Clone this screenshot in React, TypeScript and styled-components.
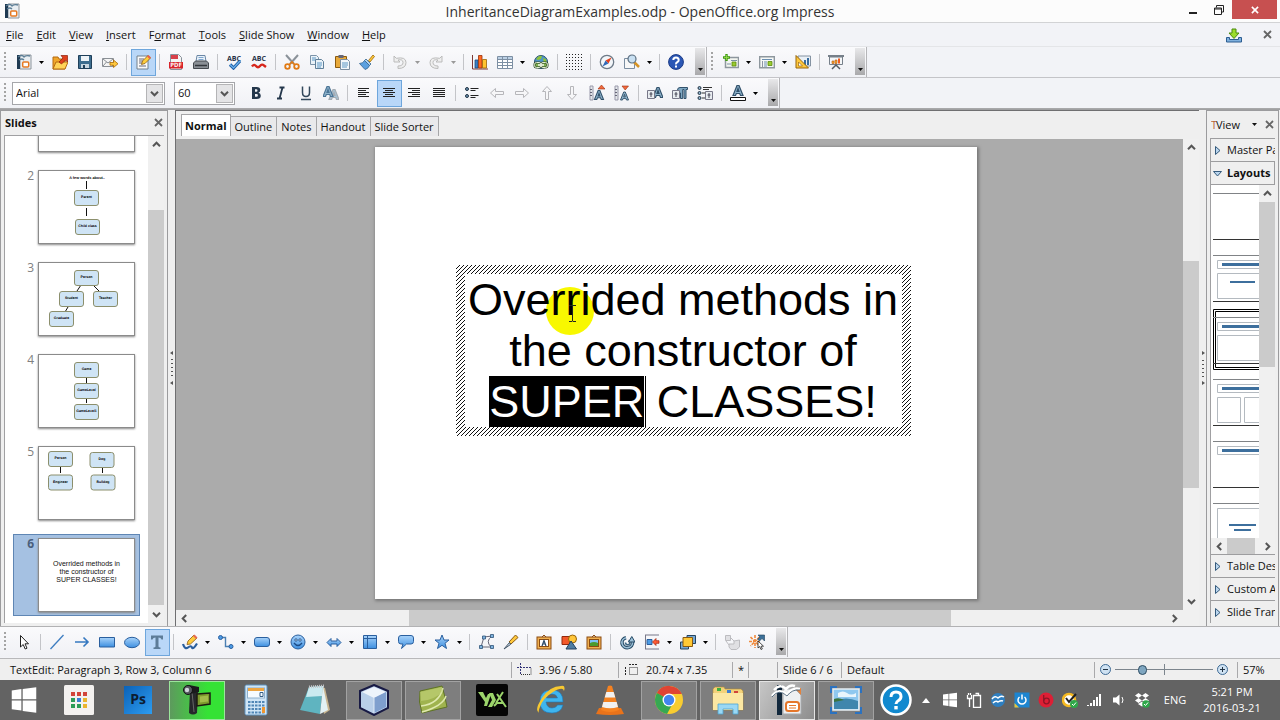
import React, { ReactNode } from "react";
import styled, { createGlobalStyle, css } from "styled-components";

const ui = `"Open Sans", "Noto Sans", sans-serif`;

const GlobalStyle = createGlobalStyle`
  * { box-sizing: border-box; }
  body { margin: 0; background: #f2f3f7; font: 11px/16px ${ui}; color: #111; }
  button { font: inherit; color: inherit; border: 0; padding: 0; background: none; }
  h1, h2, ol, ul, p { margin: 0; padding: 0; font: inherit; list-style: none; }
  svg text { text-rendering: geometricPrecision; }
`;

const Window = styled.div`
  display: flex;
  flex-direction: column;
  height: 100vh;
  overflow: hidden;
`;

/* ---------- title and menu ---------- */

const TitleBar = styled.header`
  display: grid;
  grid-template-columns: 1fr auto 1fr;
  height: 23px;
  flex: none;
  background: #fcfcfc;
  border-bottom: 1px solid #d2d3d5;
`;
const TitleIcon = styled.span`
  padding: 3px 4px;
  line-height: 0;
`;
const TitleText = styled.h1`
  font-size: 14px;
  line-height: 23px;
  color: #333;
`;
const WindowButtons = styled.div`
  display: flex;
  justify-content: flex-end;
  padding-right: 3px;
`;
const WindowButton = styled.button<{ $close?: boolean }>`
  width: ${(p) => (p.$close ? 45 : 26)}px;
  height: 19px;
  line-height: 0;
  background: ${(p) => (p.$close ? "#c75050" : "none")};
`;
const MenuBar = styled.nav`
  display: flex;
  align-items: center;
  flex: none;
  height: 24px;
  padding: 0 8px 0 6px;
  gap: 13px;
  font-size: 11px;
  border-bottom: 1px solid #e4e5e8;
`;
const MenuItem = styled.button`
  line-height: 16px;
  white-space: nowrap;
`;
const MenuTool = styled.button`
  display: flex;
  align-items: center;
  margin-left: 8px;
`;
const Spacer = styled.span`
  flex: 1;
`;

/* ---------- toolbars ---------- */

const ToolbarRow = styled.div<{ $line?: string }>`
  display: flex;
  flex: none;
  height: 31px;
  border-bottom: 1px solid ${(p) => p.$line || "#c4c4c8"};
`;
const Toolbar = styled.div`
  display: flex;
  align-items: center;
  padding-left: 4px;
  background: linear-gradient(#fafafc, #f0f1f5);
  border-right: 1px solid #b5b5b8;
`;
const Grip = styled.span`
  width: 2px;
  height: 20px;
  margin-right: 6px;
  background: repeating-linear-gradient(#a4a4a4 0 2px, transparent 2px 4px);
`;
const ToolButton = styled.button<{ $on?: boolean }>`
  display: flex;
  align-items: center;
  justify-content: center;
  width: 25px;
  height: 27px;
  padding-right: 1px;
  border: 1px solid ${(p) => (p.$on ? "#6ea6dc" : "transparent")};
  background: ${(p) => (p.$on ? "#b9d7f8" : "none")};
`;
const DropButton = styled.button<{ $off?: boolean }>`
  width: 11px;
  height: 27px;
  display: flex;
  align-items: center;
  padding-left: 2px;
  color: ${(p) => (p.$off ? "#999" : "#000")};
`;
const Divider = styled.span`
  width: 1px;
  height: 16px;
  margin: 0 4px 0 3px;
  background: #c3c4c8;
`;
const More = styled.button`
  align-self: stretch;
  display: flex;
  align-items: flex-end;
  justify-content: center;
  width: 10px;
  margin: 1px 1px 2px 6px;
  padding-bottom: 4px;
  background: linear-gradient(#e8e8ea, #a9a9ab);
`;
const Combo = styled.label<{ $w: number }>`
  position: relative;
  display: flex;
  width: ${(p) => p.$w}px;
  height: 23px;
  margin-right: 9px;
  border: 1px solid #a5a6aa;
  background: #fff;
`;
const ComboSelect = styled.select`
  appearance: none;
  flex: 1;
  min-width: 0;
  border: 0;
  outline: 0;
  padding: 0 3px;
  background: #fff;
  font: 11px/20px ${ui};
  color: #111;
`;
const ComboArrow = styled.span`
  position: absolute;
  right: 1px;
  top: 1px;
  bottom: 1px;
  width: 17px;
  display: flex;
  align-items: center;
  justify-content: center;
  background: #e4e4e6;
  border: 1px solid #b4b4b6;
  pointer-events: none;
`;

/* ---------- main area ---------- */

const Main = styled.main`
  display: flex;
  flex: 1;
  min-height: 0;
  padding-right: 1px;
  background: #efefef;
  border-top: 1px solid #a0a0a2;
  border-bottom: 1px solid #b2b2b4;
`;
const SidePanel = styled.aside<{ $w: number }>`
  display: flex;
  flex-direction: column;
  flex: none;
  width: ${(p) => p.$w}px;
  min-height: 0;
  padding: 0 3px 3px;
  border: 1px solid #9b9b9d;
  border-width: 1px 1px 0;
`;
const PanelHead = styled.div<{ $tall?: boolean }>`
  display: flex;
  align-items: center;
  flex: none;
  height: ${(p) => (p.$tall ? 27 : 24)}px;
  padding: 0 1px;
`;
const PanelTitle = styled.h2`
  flex: 1;
  font-size: 11px;
  font-weight: 700;
`;
const Splitter = styled.div`
  display: flex;
  flex-direction: column;
  align-items: center;
  justify-content: center;
  flex: none;
  width: 7px;
`;

const SlideListBox = styled.div`
  display: flex;
  flex: 1;
  min-height: 0;
  background: #fff;
  border-left: 1px solid #a0a0a2;
  border-top: 1px solid #a0a0a2;
`;
const SlideList = styled.ol`
  flex: 1;
  min-width: 0;
  display: flex;
  flex-direction: column;
  justify-content: flex-end;
  gap: 10px;
  overflow: hidden;
  padding: 0 8px 7px;
`;
const SlideItem = styled.li<{ $on?: boolean }>`
  display: flex;
  flex: none;
  height: 82px;
  padding: 3px 0;
  border: 1px solid ${(p) => (p.$on ? "#5f86b4" : "transparent")};
  background: ${(p) => (p.$on ? "#a5c1e2" : "none")};
`;
const SlideNumber = styled.span<{ $on?: boolean }>`
  width: 24px;
  padding-right: 4px;
  text-align: right;
  font-size: 12px;
  line-height: 12px;
  font-weight: ${(p) => (p.$on ? 700 : 400)};
  color: ${(p) => (p.$on ? "#4a5f7c" : "#808080")};
`;
const Thumb = styled.button`
  display: flex;
  width: 97px;
  height: 74px;
  background: #fff;
  border: 1px solid #8b8b8b;
  box-shadow: 0 1px 2px #888;
`;
const ThumbText = styled.span`
  flex: 1;
  padding: 21px 12px;
  text-align: center;
  font: 7px/8px "Liberation Sans", Arial, sans-serif;
`;

const Scroll = styled.div<{ $h?: boolean }>`
  display: flex;
  flex: none;
  flex-direction: ${(p) => (p.$h ? "row" : "column")};
  ${(p) => (p.$h ? "height" : "width")}: 16px;
  background: #f0f0f0;
`;
const ScrollCorner = styled.div`
  flex: none;
  padding-right: 17px;
  background: #f0f0f0;
`;
const ScrollButton = styled.button`
  display: flex;
  align-items: center;
  justify-content: center;
  flex: none;
  width: 16px;
  height: 17px;
`;
const ScrollPart = styled.span<{ $grow: number; $thumb?: boolean }>`
  flex: ${(p) => p.$grow} 0 0;
  background: ${(p) => (p.$thumb ? "#cbcbcb" : "none")};
`;

const Centre = styled.section`
  display: flex;
  flex-direction: column;
  flex: 1;
  min-width: 0;
  border-left: 1px solid #6f6f71;
  border-top: 1px solid #6f6f71;
`;
const Tabs = styled.div`
  display: flex;
  align-items: flex-end;
  flex: none;
  height: 28px;
  padding: 0 5px 3px;
`;
const Tab = styled.button<{ $on?: boolean }>`
  height: ${(p) => (p.$on ? 22 : 20)}px;
  padding: 0 4px;
  border: 1px solid #a6a6a8;
  border-width: 1px 1px 0 0;
  background: #e9e9eb;
  ${(p) => p.$on && css`
    padding: 0 3px;
    background: #fff;
    border-left-width: 1px;
    font-weight: 700;
  `}
`;
const WorkRow = styled.div`
  display: flex;
  flex: 1;
  min-height: 0;
`;
const Workspace = styled.div`
  flex: 1;
  min-width: 0;
  display: flex;
  justify-content: center;
  align-items: flex-start;
  padding: 8px 8px 8px 0;
  background: #ababab;
  overflow: hidden;
`;
const Slide = styled.article`
  display: flex;
  justify-content: center;
  width: 602px;
  aspect-ratio: 4 / 3;
  padding: 118px 0 0 15px;
  background: #fff;
  box-shadow: 1px 1px 3px 1px #777;
`;
const TextFrame = styled.div`
  align-self: flex-start;
  padding: 9px;
  background: linear-gradient(to bottom right, #fff 0 42%, #111 42% 58%, #fff 58%) 0 0 / 4px 4px;
`;
const SlideText = styled.p`
  position: relative;
  width: 437px;
  background: #fff;
  text-align: center;
  white-space: nowrap;
  color: #000;
  font: 45px/51px "Liberation Sans", Arial, sans-serif;
`;
const Line = styled.span`
  position: relative;
  display: block;
`;
const Selected = styled.mark`
  display: inline-block;
  height: 51px;
  color: #fff;
  background: #000;
  box-shadow: 1px 0 #fff, 2px 0 #000;
`;
const Halo = styled.span`
  position: absolute;
  left: 81px;
  top: 13px;
  width: 48px;
  height: 48px;
  border-radius: 50%;
  background: #f8f800;
`;
const IBeam = styled.svg`
  position: absolute;
  left: 103px;
  top: 31px;
`;

/* ---------- task panel ---------- */

const TaskBody = styled.div`
  display: flex;
  flex-direction: column;
  flex: 1;
  min-height: 0;
  border-left: 1px solid #a0a0a2;
`;
const TaskTab = styled.button<{ $on?: boolean }>`
  display: flex;
  align-items: center;
  flex: none;
  gap: 5px;
  height: 23px;
  padding-left: 2px;
  overflow: hidden;
  white-space: nowrap;
  border-top: 1px solid #9d9d9f;
  border-right: ${(p) => (p.$on ? "1px solid #9d9d9f" : 0)};
  font-weight: ${(p) => (p.$on ? 700 : 400)};
  svg { flex: none; }
`;
const LayoutBox = styled.div`
  display: flex;
  flex: 1;
  min-height: 0;
  background: #fff;
  border-top: 1px solid #9d9d9f;
`;
const LayoutList = styled.ul`
  flex: 1;
  min-width: 0;
  padding: 0 0 0 2px;
  overflow: hidden;
`;
const LayoutItem = styled.li`
  height: 62px;
  line-height: 0;
`;
const ViewDrop = styled.button`
  display: flex;
  align-items: center;
  gap: 12px;
  flex: 1;
`;
const Clipped = styled.span`
  width: 5px;
  overflow: hidden;
  color: #b7643a;
`;

/* ---------- status bar ---------- */

const StatusBar = styled.footer`
  display: flex;
  align-items: center;
  flex: none;
  height: 22px;
  padding: 0 12px 0 10px;
  background: #efefef;
  border-top: 1px solid #b8b8ba;
`;
const Cell = styled.span<{ $w?: number; $gap?: number }>`
  display: flex;
  align-items: center;
  gap: ${(p) => p.$gap ?? 4}px;
  flex: none;
  height: 16px;
  width: ${(p) => (p.$w ? p.$w + "px" : "auto")};
  padding-left: 5px;
  border-left: 1px solid #a9a9ab;
`;
const ZoomRange = styled.input`
  appearance: none;
  width: 98px;
  height: 14px;
  margin: 0;
  background:
    linear-gradient(#7c858d, #7c858d) 49px 50% / 1px 11px no-repeat,
    linear-gradient(#7c858d, #7c858d) 0 50% / 100% 1px no-repeat;
  &::-webkit-slider-thumb {
    appearance: none;
    width: 9px;
    height: 10px;
    border-radius: 5px;
    border: 1px solid #2d4c62;
    background: #7fa6c0;
  }
`;

/* ---------- taskbar ---------- */

const TaskBar = styled.nav`
  display: flex;
  align-items: center;
  flex: none;
  height: 40px;
  padding-right: 19px;
  gap: 3px;
  background: #636363;
  color: #fff;
`;
const TaskButton = styled.button<{ $w?: number; $state?: "open" | "active" | "rec" }>`
  display: flex;
  align-items: center;
  justify-content: center;
  flex: none;
  width: ${(p) => p.$w || 56}px;
  height: 39px;
  border: 1px solid transparent;
  ${(p) => p.$state === "open" && css`background: #7e7e7e; border-color: #a2a2a2;`}
  ${(p) => p.$state === "active" && css`background: linear-gradient(120deg, #c6c6c6, #8d8d8d); border-color: #e4e4e4;`}
  ${(p) => p.$state === "rec" && css`background: linear-gradient(90deg, #5d9a5d, #35e235 70%); border-color: #9be59b;`}
`;
const Tray = styled.div`
  display: flex;
  align-items: center;
  gap: 8px;
  margin-left: auto;
`;
const TrayButton = styled.button`
  display: flex;
  flex: none;
  width: 16px;
  height: 20px;
  align-items: center;
  justify-content: center;
`;
const Lang = styled.span`
  width: 34px;
  text-align: center;
`;
const Clock = styled.time`
  width: 64px;
  text-align: center;
  line-height: 16px;
`;

/* ---------- icons ---------- */

const navy = "#31516b";
const blue = "#4b9be6";
const edge = "#2a5f9e";

const doc = (
  <>
    <path d="M4 1h11v14H4z" fill="#e9eef2" stroke="#8c949b" />
    <path d="M1 1h3v14H1z" fill="#1f3a52" />
    <path d="M2 3q4-3 6 0q2-2 6-1M3 6q3-2 5 0" stroke="#5b7d95" fill="none" strokeWidth="1.3" />
    <rect x="6.7" y="8" width="6" height="5" rx="1" fill="#fff" stroke="#e67a22" strokeWidth="1.5" />
  </>
);
const lines = (ws: number[], align: "l" | "c" | "r") => (
  <path
    stroke="#222"
    d={ws
      .map((w, i) => {
        const x = align === "l" ? 2 : align === "r" ? 14 - w : 8 - w / 2;
        return `M${x} ${3.5 + i * 2}h${w}`;
      })
      .join("")}
  />
);
const hollow = (rot: number) => (
  <path
    transform={`rotate(${rot} 8 8)`}
    d="M1.5 8L6.5 3.5V6.5H14.5V9.5H6.5V12.5Z"
    fill="#f6f6f8"
    stroke="#b6b6ba"
  />
);
const bigA = (x: number, y: number, s: number, fill = navy) => (
  <path
    transform={`translate(${x} ${y}) scale(${s})`}
    d="M0 10L4 0H6L10 10H7.5L6.7 8H3.3L2.5 10ZM4 6H6L5 3Z"
    fill="#8fb4cc"
    stroke={fill}
    strokeWidth="1.2"
    fillRule="evenodd"
  />
);
const abc = (
  <text x="8" y="6.500" textAnchor="middle" fontSize="7" fontWeight="700" fontFamily="Open Sans, sans-serif" fill="#1f2f44">
    ABC
  </text>
);
const framed = (inner: ReactNode) => (
  <>
    <rect x="1" y="3" width="14" height="12" fill="#f0b050" stroke="#8a4b12" />
    <rect x="3.5" y="5.5" width="9" height="7" fill="#fff" stroke="#8a4b12" />
    <path d="M6 3l2-2 2 2" stroke="#8a4b12" fill="none" />
    {inner}
  </>
);

const icons: Record<string, ReactNode> = {
  doc,
  open: (
    <>
      <path d="M1 3h5l1 2h6v10H1z" fill="#f0a52a" stroke="#b46a10" />
      <path d="M1 15l3-7h12l-3 7z" fill="#ffd257" stroke="#b46a10" />
      <path d="M7 8l4-4-2-2.500h6.500V8l-2-2-4 4z" fill="#e0401c" stroke="#8e1e08" strokeWidth=".7" />
    </>
  ),
  save: (
    <>
      <path d="M1.500 1.500h13v13h-13z" fill="#3d6d8e" stroke="#1f3f59" />
      <path d="M4 2h8v5H4z" fill="#eef3f7" />
      <path d="M4 10h8v4H4z" fill="#c9d6e0" />
      <path d="M6 11h2v3H6z" fill="#1f3f59" />
    </>
  ),
  mail: (
    <>
      <path d="M.5 4.500h11v8h-11z" fill="#f4f4f4" stroke="#8a8f95" />
      <path d="M1 5l5 4 5-4M1 12l3.500-4M11 12L7.500 8" stroke="#8a8f95" fill="none" />
      <path d="M8 8.500h3.500V6L16 9.800l-4.500 3.700v-2.300H8z" fill="#ffc83c" stroke="#a86708" strokeWidth=".8" />
    </>
  ),
  edit: (
    <>
      <path d="M2 2h11v13H2z" fill="#fafafa" stroke="#72808c" />
      <path d="M4 5h5M4 7h4M4 9h3M4 12h7" stroke="#667" />
      <path d="M6.500 10.500L7.500 7 13 1.500l2.500 2.500L10 9.500z" fill="#ffcf3c" stroke="#8a5a10" strokeWidth=".8" />
      <path d="M12 2.500l1.500-1.500 2.500 2.500-1.500 1.500z" fill="#e8604c" />
    </>
  ),
  pdf: (
    <>
      <path d="M2.500.5h8l3 3v12h-11z" fill="#f4f4f4" stroke="#88919a" />
      <path d="M3 1h7v4H3z" fill="#d8404a" />
      <path d="M1 8h14v6.500H1z" fill="#d8232a" />
      <text x="8" y="13.300" fontSize="6" fontWeight="700" textAnchor="middle" fill="#fff" fontFamily="Open Sans, sans-serif">PDF</text>
    </>
  ),
  print: (
    <>
      <path d="M4 1.500h8l1 6H3z" fill="#eaf2fa" stroke="#6b87a5" />
      <path d="M5.500 3.500h5M5.500 5.500h5" stroke="#7fa6cf" />
      <path d="M.5 9l2-2h11l2 2v5.500H.5z" fill="#8a8f95" stroke="#44494f" />
      <path d="M2 11.500h12" stroke="#33373c" strokeWidth="1.500" />
    </>
  ),
  spell: <>{abc}<path d="M4 10.500l3.500 3.500L14 7" fill="none" stroke="#1f5fa8" strokeWidth="3.200" /><path d="M4 10.500l3.500 3.500L14 7" fill="none" stroke="#6fb4ee" strokeWidth="1.200" /></>,
  autospell: <>{abc}<path d="M1 12.500q2-3 4-.5t4 0 4-.5l2 1.500" fill="none" stroke="#d6261c" strokeWidth="2.400" /></>,
  cut: (
    <>
      <path d="M2 1l8 9M14 1L6 10" stroke="#8b9299" strokeWidth="2" />
      <circle cx="3.500" cy="12.500" r="2.300" fill="none" stroke="#e07a14" strokeWidth="1.800" />
      <circle cx="12.500" cy="12.500" r="2.300" fill="none" stroke="#e07a14" strokeWidth="1.800" />
      <path d="M5 11l3-3 3 3" stroke="#e07a14" strokeWidth="1.600" fill="none" />
    </>
  ),
  copy: (
    <>
      <path d="M1.500 1.500h6l2 2v7h-8z" fill="#eaf2f8" stroke="#7b93a8" />
      <path d="M6.500 5.500h6l2 2v7h-8z" fill="#eaf2f8" stroke="#5f7f99" />
      <path d="M3 4h4M3 6h3M8 9h5M8 11h5M8 13h4" stroke="#5b96c4" />
    </>
  ),
  paste: (
    <>
      <path d="M1.500 2.500h11v11h-11z" fill="#e8a93a" stroke="#8a5a10" />
      <path d="M4.500 1h5v3h-5z" fill="#667" />
      <path d="M6.500 5.500h7l2 2v8h-9z" fill="#f2f6fa" stroke="#7b8da0" />
      <path d="M8 9h6M8 11h6M8 13h5" stroke="#5b96c4" />
    </>
  ),
  brush: (
    <>
      <path d="M9.500 6.500L14 1l1.500 1.500L11 8z" fill="#ffca3a" stroke="#9a6508" strokeWidth=".8" />
      <path d="M7 5l5 5-1.500 1.500L5.500 6.500z" fill="#b0d3f0" stroke="#33648f" strokeWidth=".8" />
      <path d="M5.500 6.500l5 5Q9 15 6 15.500L.5 9.500Q4 9.500 5.500 6.500z" fill="#5ba0df" stroke="#33648f" strokeWidth=".8" />
    </>
  ),
  undo: <path d="M2 2v6h6L6 6q5-1 5 2.500T6 12v2.500q8 0 8-6T4.300 4.300z" fill="#eee" stroke="#bbb" />,
  redo: <path transform="translate(16 0) scale(-1 1)" d="M2 2v6h6L6 6q5-1 5 2.500T6 12v2.500q8 0 8-6T4.300 4.300z" fill="#eee" stroke="#bbb" />,
  chart: (
    <>
      <path d="M.5 1v14H16" stroke="#7b3a36" fill="none" />
      <path d="M3 6h3v8H3z" fill="#3a7fc4" stroke="#1e4c7c" strokeWidth=".8" />
      <path d="M6.500 1.500h3.500V14H6.500z" fill="#ff6a20" stroke="#9a2e08" strokeWidth=".8" />
      <path d="M10.500 5.500h4V14h-4z" fill="#ffc42e" stroke="#9a6508" strokeWidth=".8" />
    </>
  ),
  table: (
    <>
      <path d="M.5 2.500h15v12H.5z" fill="#fff" stroke="#7d8fa3" />
      <path d="M1 3h14v2.500H1z" fill="#bcd0e4" />
      <path d="M1 5.500h14M1 8.500h14M1 11.500h14M5.500 3v11M10.500 3v11" stroke="#7d8fa3" />
    </>
  ),
  link: (
    <>
      <circle cx="8" cy="8" r="6.500" fill="#4f94c9" stroke="#28506f" />
      <path d="M3 5q3-4 6-3l-1 3-3 1zM10 4l3 1 1 4-3 1z" fill="#8fc23a" />
      <rect x="1.500" y="8.500" width="6.500" height="5" rx="2" fill="#7fae50" stroke="#2f4a28" strokeWidth="2" />
      <rect x="8" y="8.500" width="6.500" height="5" rx="2" fill="#7fae50" stroke="#2f4a28" strokeWidth="2" />
      <rect x="1.500" y="8.500" width="6.500" height="5" rx="2" fill="none" stroke="#e2ecd2" />
      <rect x="8" y="8.500" width="6.500" height="5" rx="2" fill="none" stroke="#e2ecd2" />
      <path d="M5 11h6" stroke="#f4f8ec" strokeWidth="1.500" />
    </>
  ),
  grid: <path d="M0 .5h16M0 3.500h16M0 6.500h16M0 9.500h16M0 12.500h16M0 15.500h16" stroke="#222" strokeDasharray="1 2" />,
  nav: (
    <>
      <circle cx="8" cy="8" r="6.700" fill="#f3f6f9" stroke="#6d7a88" strokeWidth="1.300" />
      <path d="M12.500 3.500L9.500 9.500 6.500 6.500z" fill="#e3401f" />
      <path d="M3.500 12.500L9.500 9.500 6.500 6.500z" fill="#3069b6" />
    </>
  ),
  zoom: (
    <>
      <path d="M.5 4.500h10v10H.5z" fill="#f7f7f7" stroke="#7b8da0" />
      <path d="M10 8l5 5" stroke="#d69324" strokeWidth="2.500" />
      <circle cx="8" cy="5" r="4" fill="#c9e0f2" stroke="#5c6f80" strokeWidth="1.200" />
    </>
  ),
  help: (
    <>
      <circle cx="8" cy="8" r="7.400" fill="#2b57b5" stroke="#1a3a86" />
      <path d="M5.300 6Q5.300 3.500 8 3.500T10.700 6Q10.700 7.300 9.300 8.200T8 10.300" stroke="#fff" strokeWidth="2" fill="none" />
      <path d="M7 11.500h2v2H7z" fill="#fff" />
    </>
  ),
  slide: (
    <>
      <path d="M2.500 3.500h13v10h-13z" fill="#f3f6f0" stroke="#8e979e" strokeWidth="1.500" />
      <path d="M8 6.500h6M4 10h4" stroke="#7c93a5" />
      <path d="M9 8h4v4H9z" fill="#9acb2e" stroke="#5a8a10" strokeWidth=".8" />
      <path d="M3.500 0v7M0 3.500h7" stroke="#3f9a10" strokeWidth="2.400" />
      <path d="M3.500 1v5M1 3.500h5" stroke="#9ade50" strokeWidth=".8" />
    </>
  ),
  layout: (
    <>
      <path d="M.700 2.700h14.600v11H.700z" fill="#f6f8f6" stroke="#8e979e" strokeWidth="1.400" />
      <path d="M3 5.500h10M5 8h3M5 10h3M5 12h3" stroke="#6c8fb0" />
      <path d="M3 8h1M3 10h1M3 12h1" stroke="#235" />
      <path d="M9 7.500h4v4H9z" fill="#9acb2e" stroke="#5a8a10" strokeWidth=".8" />
    </>
  ),
  design: (
    <>
      <path d="M3 2h12.500v10H3z" fill="#e9eff5" stroke="#8593a2" />
      <path d="M9 6h2v5H9zM12 4h2v7h-2z" fill="#376b9e" />
      <path d="M1 1.500L13.500 14H1z" fill="#ffc83c" stroke="#96640c" />
      <path d="M3.500 8l4 4h-4z" fill="#fff" stroke="#96640c" strokeWidth=".7" />
    </>
  ),
  show: (
    <>
      <path d="M0 2h16" stroke="#77808a" strokeWidth="2" />
      <path d="M1.500 3h13v7.500h-13z" fill="#f5f7f9" stroke="#77808a" />
      <path d="M4 7h2v2.500H4zM7 6h2v3.500H7z" fill="#ffae2e" stroke="#b0500e" strokeWidth=".6" />
      <path d="M10 4.500h2v5h-2z" fill="#f05a20" />
      <path d="M4 15l4-4 4 4" stroke="#555c63" strokeWidth="1.500" fill="none" />
    </>
  ),
  bold: <path d="M4 2h4.500q3.800 0 3.800 3.100 0 2-1.800 2.600 2.300.6 2.300 3 0 3.300-4.300 3.300H4zM7 4.200v2.600h1.300q1.200 0 1.200-1.300T8.300 4.200zM7 9v2.800h1.500q1.400 0 1.400-1.400T8.500 9z" fill="#24374b" fillRule="evenodd" />,
  italic: <path d="M6.500 2.500h5M4 13.500h5M9.500 2.500L6.500 13.500" stroke="#24374b" strokeWidth="1.800" />,
  underline: <path d="M4.500 1.500v6q0 4 3.500 4t3.500-4v-6M3 14.500h10" stroke="#33485c" strokeWidth="1.500" fill="none" />,
  shadow: (
    <>
      <g opacity=".75">{bigA(6, 4.5, 1, "#8b949c")}</g>
      {bigA(0, 1.5, 1, "#4c7596")}
    </>
  ),
  left: lines([11, 8, 11, 8, 11], "l"),
  centre: lines([12, 8, 12, 8, 12], "c"),
  right: lines([12, 8, 12, 8, 12], "r"),
  justify: lines([12, 12, 12, 12, 12], "l"),
  bullets: (
    <>
      <circle cx="3" cy="4" r="1.500" fill="#6a94b4" stroke="#234" />
      <circle cx="3" cy="11" r="1.500" fill="#6a94b4" stroke="#234" />
      <path d="M6.500 3.500h8M6.500 5.500h5M6.500 10.500h8M6.500 12.500h5" stroke="#222" />
    </>
  ),
  aLeft: hollow(0),
  aRight: hollow(180),
  aUp: hollow(90),
  aDown: hollow(270),
  incSpace: <><path d="M1 1h3v14H1z" fill="#e4e7ea" stroke="#99a" /><path d="M1 4.500h2M1 7.500h2M1 10.500h2" stroke="#667" />{bigA(5.5, 5.5, 0.9)}<path d="M9 4l3.500-4L16 4z" fill="#f06a3c" stroke="#a02e10" strokeWidth=".6" /></>,
  decSpace: <><path d="M1 1h3v14H1z" fill="#e4e7ea" stroke="#99a" /><path d="M1 4.500h2M1 7.500h2M1 10.500h2" stroke="#667" />{bigA(6.5, 7, 0.8)}<path d="M8 1l3.200 4L14.500 1z" fill="#f06a3c" stroke="#a02e10" strokeWidth=".6" /></>,
  charDlg: <>{bigA(6, 2.5, 1)}<path d="M.5 5.500h7v8h-7z" fill="#e8ecf0" stroke="#778" /><path d="M4 7v5M2.500 9h3" stroke="#445" /></>,
  paraDlg: <><path d="M15.500 2.500H8q-2.500 0-2.500 2.700T8.500 8v5.500h2.200V4.500H12v9h2V4.500h1.500z" fill="#7ea7c2" stroke={navy} /><path d="M.5 5.500h7v8h-7z" fill="#e8ecf0" stroke="#778" /><path d="M4 7v5M2.500 9h3" stroke="#445" /></>,
  bulletDlg: (
    <>
      <g fill="#8fb4cc" stroke="#234"><circle cx="2.500" cy="3" r="1.500" /><circle cx="2.500" cy="8" r="1.500" /><circle cx="2.500" cy="13" r="1.500" /></g>
      <path d="M6 2.500h9M6 4.500h6M5 8h3M5 13h3" stroke="#333" />
      <path d="M8.500 6.500h7v8h-7z" fill="#e8ecf0" stroke="#778" />
      <path d="M12 8v5M10.500 10h3" stroke="#445" />
    </>
  ),
  fontColor: <>{bigA(3, 0.500, 1)}<path d="M.5 12.500h15v3H.5z" fill="#fff" stroke="#111" /></>,
  select: <path d="M4.500 1.500v11.500l2.700-2.500 2 4.500 1.800-.8-2-4.400h3.500z" fill="#fff" stroke="#222" />,
  line: <path d="M1.500 15L14.500 1" stroke="#3c7cc0" strokeWidth="1.300" />,
  arrow: <path d="M1 8h13M9.500 3.500L14 8l-4.500 4.500" stroke="#3578c0" strokeWidth="1.600" fill="none" />,
  rect: <path d="M.5 3.500h15v9.500H.5z" fill="url(#sky)" stroke={edge} />,
  ellipse: <ellipse cx="8" cy="8.500" rx="7.500" ry="5.200" fill="url(#sky)" stroke={edge} />,
  text: <path d="M2 1.500h12v4h-1.500Q12 3.500 9.500 3.500V12.500q0 1 2 1V15h-7v-1.500q2 0 2-1V3.500Q4 3.500 3.500 5.500H2z" fill="#5d7c98" />,
  pencil: (
    <>
      <path d="M1 10q2 6 5 3.500t4 0 5-4" stroke={edge} strokeWidth="2.200" fill="none" />
      <path d="M5 10.500L6 7l6-6 3 3-6.500 6z" fill="#ffcb3b" stroke="#8a5a10" strokeWidth=".8" />
      <path d="M11 2l1.500-1.500 3 3L14 5z" fill="#e66a54" />
    </>
  ),
  connector: <><path d="M3 3.500h4.500v9H13" stroke="#4a7fb2" strokeWidth="1.400" fill="none" /><circle cx="2.500" cy="3.500" r="2" fill={blue} stroke={edge} /><circle cx="13" cy="12.500" r="2" fill={blue} stroke={edge} /></>,
  block: <rect x=".5" y="3.500" width="15" height="9" rx="2.500" fill="url(#sky)" stroke={edge} />,
  smiley: <><circle cx="8" cy="8" r="7" fill="url(#sky)" stroke={edge} /><path d="M4 9q4 5 8 0" stroke="#1d4c86" fill="none" strokeWidth="1.300" /><path d="M5 5h2v2H5zM9 5h2v2H9z" fill="#fff" stroke="#1d4c86" strokeWidth=".8" /></>,
  double: <path d="M1 8.500L5 4.500v2.500h6V4.500l4 4-4 4v-2.500H5v2.500z" fill="url(#sky)" stroke={edge} />,
  flow: <><path d="M1.500 1.500h13v13h-13z" fill="url(#sky)" stroke={edge} /><path d="M1.500 4.500h13M5.500 1.500v13" stroke={edge} /></>,
  callout: <path d="M3 1.500h10q2.500 0 2.500 2.500v3.500q0 2.500-2.500 2.500H8.500L3.500 14.500 5 10H3Q.5 10 .5 7.500V4Q.5 1.500 3 1.500z" fill="url(#sky)" stroke={edge} />,
  star: <path d="M8 1l2 5h5l-4 3.300 1.500 5.200L8 11.300l-4.500 3.200L5 9.300 1 6h5z" fill="url(#sky)" stroke={edge} />,
  points: <><path d="M3 13l3-10 8-1M3 13h12M14 2q-7 5-1 11" stroke="#667" fill="none" /><path d="M1.500 11.500h3v3h-3zM4.500 2h3v3h-3zM12.500.5h3v3h-3zM12.500 11.500h3v3h-3z" fill="#7fb2de" stroke="#2f5478" strokeWidth=".8" /></>,
  glue: <><path d="M6 8l6.500-7L15 3.500 8 10z" fill="#ffc83c" stroke="#8a5a10" /><path d="M6.500 8.500L1 15l6.500-4.500z" fill="#cfe0f0" stroke="#456" /></>,
  fontwork: framed(<path d="M6 12l2-5.500L10 12M6.800 10h2.500" stroke="#2c4a66" strokeWidth="1.200" fill="none" />),
  gallery: <><path d="M1 2.500h8v8H1z" fill="#f2582a" stroke="#93280c" /><circle cx="11.500" cy="5" r="4" fill="#ffc63a" stroke="#976409" /><path d="M10 7l5.500 8H5z" fill="#4f7da3" stroke="#24435f" /></>,
  picture: framed(<><path d="M4 6h8v3H4z" fill="#7ec0f4" /><path d="M4 9q4-2 8 0v3H4z" fill="#4c9a2e" /></>),
  rotate: (
    <>
      <path d="M13.500 8A5.300 5 0 1 1 7 3.800" stroke="#264a66" strokeWidth="3.600" fill="none" />
      <path d="M13.500 8A5.300 5 0 1 1 7 3.800" stroke="#9cc0d8" strokeWidth="1.600" fill="none" />
      <path d="M6.500 8.500a2.200 2.200 0 1 0 3-2" stroke="#3c6684" strokeWidth="1.500" fill="none" />
      <path d="M9.500 8h6.500L12.800 2.500z" fill="#9cc0d8" stroke="#264a66" />
    </>
  ),
  align: <><path d="M1 1h14M1 15h14M1.500 1v14" stroke="#778" /><path d="M3 5.500h5v5H3z" fill="#4b9be6" stroke={edge} /><path d="M15 6.700h-3V4.500L8.500 8l3.500 3.500V9.300h3z" fill="#ff5b36" stroke="#a02008" strokeWidth=".7" /></>,
  arrange: <><path d="M7 1.500h8.500v8H7z" fill="#74a7d4" stroke="#24435f" /><path d="M.5 8h8v7h-8z" fill="#74a7d4" stroke="#24435f" /><path d="M3 3.500h9.500v9H3z" fill="#ffc935" stroke="#8a5a10" /></>,
  extrude: <path d="M1.500 1.500h5v5h-5zM5 10h5V7l5.500-1v7l-3 2.500H7L5 13zM7 4l3 3M2 7l3 4" fill="#e0e0e3" stroke="#bcbcc0" />,
  animate: <><path d="M6 1v13M0 7.500h12M1.500 3l9 9M10.500 3l-9 9" stroke="#f08a3c" strokeWidth="1.600" strokeDasharray="3 1" /><path d="M9 1h6.500v6L13 4.500 10.500 7 8.500 5 11 3z" fill="#3d7199" stroke="#1f3f59" strokeWidth=".6" /><path d="M9 7v7l1.700-1.500L12 15.500l1.300-.6-1.200-2.700h2.400z" fill="#fff" stroke="#222" strokeWidth=".8" /></>,
  download: <><path d="M.5 10.500h3v2h9v-2h3v4.500H.5z" fill="#7fb0dd" stroke="#2c5d90" /><path d="M6 2h4v4h3L8 11.500 3 6h3z" fill="#9bdc2c" stroke="#4b8a0c" /></>,
};

const Icon = ({ name }: { name: string }) => (
  <svg width="16" height="16" viewBox="0 0 16 16" aria-hidden="true">
    <defs>
      <linearGradient id="sky" x1="0" y1="0" x2="0" y2="1">
        <stop offset="0" stopColor="#a9d3fa" />
        <stop offset="1" stopColor="#3d8fe0" />
      </linearGradient>
    </defs>
    {icons[name]}
  </svg>
);

const Triangle = () => (
  <svg width="5" height="3" viewBox="0 0 5 3"><path d="M0 0h5L2.500 3z" fill="currentColor" /></svg>
);
const Cross = ({ c = "#666", s = 9 }) => (
  <svg width={s} height={s} viewBox="0 0 9 9"><path d="M1 1l7 7M8 1L1 8" stroke={c} strokeWidth="1.800" /></svg>
);
const Chevron = ({ rot = 0 }) => (
  <svg width="9" height="9" viewBox="0 0 9 9"><path transform={`rotate(${rot} 4.500 4.500)`} d="M1 6.200l3.500-3.500L8 6.200" stroke="#555" strokeWidth="2" fill="none" /></svg>
);

/* "|" is a divider, "v" a drop-down arrow ("v-" disabled), "*" marks a pressed button */
const Tools = ({ items }: { items: string }) => (
  <>
    {items.split(" ").map((item, i) => {
      if (item === "|") return <Divider key={i} />;
      if (item === "v" || item === "v-")
        return <DropButton key={i} $off={item === "v-"} aria-label="More choices"><Triangle /></DropButton>;
      const name = item.replace("*", "");
      return (
        <ToolButton key={i} $on={item.endsWith("*")} aria-label={name}>
          <Icon name={name} />
        </ToolButton>
      );
    })}
  </>
);
const Overflow = () => <More aria-label="Toolbar options"><Triangle /></More>;

const Dropdown = ({ label, value, w }: { label: string; value: string; w: number }) => (
  <Combo $w={w}>
    <ComboSelect aria-label={label} defaultValue={value}><option>{value}</option></ComboSelect>
    <ComboArrow><Chevron rot={180} /></ComboArrow>
  </Combo>
);

const ScrollBar = ({ h, parts, end = true }: { h?: boolean; parts: number[]; end?: boolean }) => (
  <Scroll $h={h}>
    <ScrollButton aria-label="Scroll back"><Chevron rot={h ? -90 : 0} /></ScrollButton>
    <ScrollPart $grow={parts[0]} />
    <ScrollPart $grow={parts[1]} $thumb />
    <ScrollPart $grow={parts[2]} />
    {end && <ScrollButton aria-label="Scroll forward"><Chevron rot={h ? 90 : 180} /></ScrollButton>}
  </Scroll>
);

const SplitHandle = ({ rot = 0 }) => (
  <Splitter>
    <svg width="4" height="34" viewBox="0 0 4 34">
      <g transform={`rotate(${rot} 2 17)`} fill="#555">
        <path d="M3 0v4L0 2zM3 30v4L0 32z" />
        <path d="M1 8h2v1H1zM1 12h2v1H1zM1 16h2v1H1zM1 20h2v1H1zM1 24h2v1H1z" />
      </g>
    </svg>
  </Splitter>
);

/* ---------- slide thumbnails ---------- */

type Box = [number, number, string];
const Diagram = ({ boxes, links, title }: { boxes: Box[]; links: string; title?: string }) => (
  <svg width="95" height="72" viewBox="0 0 95 72">
    <path d={links} stroke="#111" fill="none" />
    {boxes.map(([x, y, label]) => (
      <g key={label}>
        <rect x={x - 12} y={y - 7.5} width="24" height="15" rx="2.500" fill="#cfe4f5" stroke="#8c8f6c" />
        <text x={x} y={y} textAnchor="middle" fontSize="3.500" fontWeight="700" fontFamily="Liberation Sans, sans-serif">{label}</text>
      </g>
    ))}
    {title && <text x="48" y="8" textAnchor="middle" fontSize="3.800" fontWeight="700" fontFamily="Liberation Sans, sans-serif">{title}</text>}
  </svg>
);

const slides: { n: number; art: ReactNode; on?: boolean }[] = [
  { n: 1, art: null },
  { n: 2, art: <Diagram title="A few words about.." links="M47.500 10v8M47.500 37v8" boxes={[[47.5, 27, "Parent"], [48.5, 56, "Child class"]]} /> },
  { n: 3, art: <Diagram links="M42 22l-4 6M54 22l6 6M29 44l-3 5" boxes={[[47.5, 15, "Person"], [32.5, 36, "Student"], [66.5, 36, "Teacher"], [22.5, 56, "Graduate"]]} /> },
  { n: 4, art: <Diagram links="M47.500 22v6M47.500 43v5" boxes={[[47.5, 15, "Game"], [47.5, 36, "GameLevel"], [47.5, 57, "GameLevel1"]]} /> },
  { n: 5, art: <Diagram links="M21.500 20v6M63.500 20v6" boxes={[[21.5, 12, "Person"], [21.5, 35.5, "Engineer"], [63, 13, "Dog"], [64, 35.5, "Bulldog"]]} /> },
  { n: 6, on: true, art: <ThumbText>Overrided methods in the constructor of SUPER CLASSES!</ThumbText> },
];

const heading = (
  <>
    <path d="M4.500 13.500H60v8H4.500z" fill="none" stroke="#b4bac0" />
    <path d="M9 17.500h50" stroke="#3d6f9d" strokeWidth="3" />
  </>
);
const layoutArt: { body: ReactNode; on?: boolean }[] = [
  { body: null },
  { body: <>{heading}<path d="M4.500 26.500H60v25H4.500z" fill="none" stroke="#b4bac0" /><path d="M17 35h25" stroke="#3d6f9d" strokeWidth="2" /></> },
  { on: true, body: <>{heading}<path d="M4.500 26.500H60v25H4.500z" fill="none" stroke="#b4bac0" /></> },
  { body: <>{heading}<path d="M4.500 26.500h23v25h-23zM31.500 26.500H60v25H31.500z" fill="none" stroke="#b4bac0" /></> },
  { body: heading },
  { body: <><path d="M4.500 13.500H60v38H4.500z" fill="none" stroke="#b4bac0" /><path d="M16 30h27M21 35h17" stroke="#3d6f9d" strokeWidth="2" /></> },
];

const Disclosure = ({ open }: { open?: boolean }) => (
  <svg width="9" height="9" viewBox="0 0 9 9">
    <path d={open ? "M.5 2.500h8l-4 4.500z" : "M2.500.5v8L7 4.500z"} fill="#b9d5ee" stroke="#355a7c" />
  </svg>
);

/* ---------- taskbar pictures ---------- */

const Big = ({ children, s = 32 }: { children: ReactNode; s?: number }) => (
  <svg width={s} height={s} viewBox="0 0 32 32" aria-hidden="true">{children}</svg>
);

const winLogo = <path d="M2 5l11-1.500V15H2zM14.500 3.300L30 1.500V15H14.500zM2 16.500h11v11.500L2 26.500zM14.500 16.500H30V30.500L14.500 28.500z" fill="#fff" />;

const apps: { name: string; w?: number; state?: "open" | "active" | "rec"; art: ReactNode }[] = [
  { name: "Start", w: 48, art: <Big s={28}>{winLogo}</Big> },
  {
    name: "Apps",
    art: (
      <Big>
        <rect x="1" y="1" width="30" height="30" rx="1.500" fill="#f3f1ef" />
        <path d="M8 8h4v4H8zM14 8h4v4h-4zM20 8h4v4h-4z" fill="#d2453a" />
        <path d="M8 14h4v4H8zM8 20h4v4H8z" fill="#2e9c58" />
        <path d="M14 14h4v4h-4z" fill="#3a7fd5" />
        <path d="M20 14h4v4h-4zM20 20h4v4h-4z" fill="#eab52e" />
        <path d="M14 20h4v4h-4z" fill="#2e9c58" />
      </Big>
    ),
  },
  {
    name: "Photoshop",
    art: (
      <Big>
        <defs><linearGradient id="ps" x1="0" y1="0" x2="1" y2="1"><stop offset="0" stopColor="#0b62b8" /><stop offset="1" stopColor="#2d9cf0" /></linearGradient></defs>
        <rect x="2" y="2" width="28" height="28" fill="url(#ps)" />
        <text x="16" y="20" fontSize="14" fontWeight="700" textAnchor="middle" fill="#0c1d33" fontFamily="Open Sans, sans-serif">Ps</text>
      </Big>
    ),
  },
  {
    name: "Recorder", state: "rec",
    art: (
      <Big>
        <path d="M9 6l8 1-1 22q-4 3-8 0z" fill="#26272b" />
        <path d="M11 8l2 20" stroke="#666" />
        <path d="M8 1l10 2v5l-9 2z" fill="#1a1a1c" />
        <circle cx="7" cy="6" r="4.500" fill="#55585f" stroke="#111" /><circle cx="6" cy="6" r="2.200" fill="#cfd4da" />
        <path d="M16 10l13-1v11l-13 2z" fill="#7c9a2c" stroke="#1c1c10" strokeWidth="1.500" />
        <path d="M19 12.500l8-1v6l-8 1z" fill="#a3bc4a" />
      </Big>
    ),
  },
  {
    name: "Calculator",
    art: (
      <Big>
        <rect x="5" y="1" width="22" height="30" rx="1.500" fill="#cfe5f6" stroke="#5f93bf" />
        <rect x="7.500" y="4" width="17" height="10" fill="#f6fbff" stroke="#8fb0cc" />
        <path d="M8 4h16v3H8z" fill="#eda542" />
        <path d="M20 8.500h3v4h-3z" fill="none" stroke="#345f86" />
        <path d="M8 18h17M8 21.500h17M8 25h17M8 28.500h17" stroke="#4f86b6" strokeWidth="2.200" strokeDasharray="2.500 1" />
        <path d="M22 23h3v6h-3z" fill="#f0962e" />
      </Big>
    ),
  },
  {
    name: "Notepad",
    art: (
      <Big>
        <path d="M22 3l4 1 5 22-6 4z" fill="#c8b590" />
        <path d="M10 3l14-1-3 28L1 26z" fill="#5fb4c0" />
        <path d="M10 3l14-1-1 10-16 1z" fill="#cbeaf0" />
        <path d="M21 30l3-28 5 24z" fill="#e2f1f4" />
        <path d="M10 3l15-1" stroke="#c6c9cc" strokeWidth="3" strokeDasharray="1 1" />
      </Big>
    ),
  },
  {
    name: "NetBeans", state: "open",
    art: (
      <Big>
        <path d="M16 1l14 6v17l-14 7L2 24V7z" fill="#b9cfe9" stroke="#181a44" strokeWidth="2" />
        <path d="M16 3l12 5-12 6L4 8z" fill="#eef4fb" />
        <path d="M16 14l12-6v15l-12 6z" fill="#7f9fce" />
        <path d="M16 14v15" stroke="#dfeaf6" />
      </Big>
    ),
  },
  {
    name: "Camtasia", state: "open",
    art: (
      <Big>
        <path d="M3 7l22-5q3 10 5 21L5 29Q1 18 3 7z" fill="#9fb34e" stroke="#5f7326" />
        <path d="M4 22Q22 20 26 4M5 28Q26 22 29 12" stroke="#dfe9ae" strokeWidth="1.500" fill="none" />
        <path d="M3 8l22-5 1 4Q18 16 4 17z" fill="#c5d47c" opacity=".6" />
      </Big>
    ),
  },
  {
    name: "YoYo",
    art: (
      <Big>
        <rect width="32" height="32" rx="2" fill="#050505" />
        <path d="M2 8h5l3 6 2-4h3l-4 12H8l1-4z" fill="#9bd46a" />
        <path d="M13 9h4l3 7-4 7h-4l4-7z" fill="#9bd46a" />
        <path d="M27 8l-7 11M21 10l9 13M18 22l3-3h6" stroke="#9bd46a" strokeWidth="2" fill="none" />
      </Big>
    ),
  },
  {
    name: "Internet Explorer",
    art: (
      <Big>
        <path d="M28 18H11q1 6 6 6 4 0 5.500-3h5.500q-2 8-11 8Q5 29 5 17.500T17 6q11 0 11 12zM22.500 14Q21.500 10 17 10t-5.700 4z" fill="#3fb5ee" stroke="#1b78bd" strokeWidth=".6" fillRule="evenodd" />
        <path d="M4 29Q-1 26 7 14T26 2q5-1 3 5Q28 2 18 8T5 23q-2 4-1 6z" fill="#f6c831" />
      </Big>
    ),
  },
  {
    name: "VLC",
    art: (
      <Big>
        <path d="M5 24h22l3 6q-14 2-28 0z" fill="#e9731a" />
        <path d="M14 2q2-1 4 0l7 24q-9 4-18 0z" fill="#f58220" />
        <path d="M12.300 8h7.400l1.600 5.500H10.700zM9.300 18h13.400l1.300 5q-8 2.500-16 0z" fill="#f1f1f1" />
      </Big>
    ),
  },
  {
    name: "Chrome", state: "open",
    art: (
      <Big>
        <circle cx="16" cy="16" r="14" fill="#f8cc30" />
        <path d="M16 16L3.900 9A14 14 0 0 0 14 29.900L20 19z" fill="#36a853" />
        <path d="M16 16L3.900 9A14 14 0 0 1 28.800 10H16z" fill="#e04434" />
        <path d="M16 16l-6 3.500L3.900 9z" fill="#36a853" />
        <circle cx="16" cy="16" r="6.500" fill="#fff" /><circle cx="16" cy="16" r="5.200" fill="#4285f0" />
      </Big>
    ),
  },
  {
    name: "Explorer", state: "open",
    art: (
      <Big>
        <path d="M1 5l2-2h9l1 2h16l2 2v19H1z" fill="#f3d27a" stroke="#b08c38" strokeWidth=".6" />
        <path d="M5 4h4v3H5z" fill="#3fae3f" /><path d="M15 6h4v3h-4z" fill="#3f7fd0" /><path d="M22 7h4v3h-4z" fill="#d0453a" />
        <path d="M1 9h30v17H1z" fill="#fbe7a2" />
        <path d="M6 30V20h20v10h-5v-5H11v5z" fill="#9ad8f4" stroke="#4fa5d0" strokeWidth=".8" />
      </Big>
    ),
  },
  {
    name: "OpenOffice", state: "active",
    art: (
      <Big>
        <path d="M6 1h5v30H6z" fill="#12283c" />
        <path d="M12 5h12l6 6v19H12z" fill="#eef0f2" stroke="#a5a9ad" />
        <path d="M24 4h6v7z" fill="#e5823a" />
        <path d="M1 12q7-9 15-1 5-8 13-6M3 6q6-7 12-1 4-5 9-3" stroke="#fff" strokeWidth="2.500" fill="none" />
        <path d="M1 13q7-9 15-1 5-7 13-6" stroke="#37536b" strokeWidth=".8" fill="none" />
        <rect x="15" y="18" width="13" height="9" rx="2.500" fill="#fff" stroke="#e5762a" strokeWidth="2" />
        <path d="M18 21.500h7M18 24h7" stroke="#e5762a" />
      </Big>
    ),
  },
  {
    name: "Viewer", state: "open",
    art: (
      <Big>
        <path d="M3 5h26v21H3z" fill="#8fc8ef" stroke="#e6eef4" strokeWidth="1.500" />
        <path d="M4 17q12-5 24 0v8H4z" fill="#3f86ad" /><path d="M4 15q5-2 10 1l-10 2z" fill="#3a7440" /><path d="M8 9q5-3 9 0t9 0v4H8z" fill="#e9f5fc" />
        <path d="M1 9V3h6M25 3h6v6M31 23v6h-6M7 29H1v-6" stroke="#2b72c0" strokeWidth="2" fill="none" />
      </Big>
    ),
  },
  {
    name: "Help", w: 38,
    art: (
      <Big>
        <circle cx="16" cy="16" r="14.500" fill="#1189cf" stroke="#fff" strokeWidth="2.500" />
        <path d="M11 13q0-5 5-5t5 4.500q0 2.500-2.500 4T16 20" stroke="#fff" strokeWidth="3" fill="none" />
        <path d="M14.300 22h3.400v3.400h-3.400z" fill="#fff" />
      </Big>
    ),
  },
];

const tray: { name: string; art: ReactNode }[] = [
  { name: "Show hidden icons", art: <path d="M8 6l4 5H4z" fill="#fff" /> },
  { name: "Windows update", art: <g transform="scale(.5)">{winLogo}</g> },
  { name: "Power", art: <path d="M7.500 3.500h7v12h-7zM9.500 1.500h3v2M1.500 3v3.500h4V3M2.500 1v2M4.500 1v2M3.500 7v8" stroke="#fff" strokeWidth="1.300" fill="none" /> },
  { name: "OpenOffice quickstarter", art: <><circle cx="8" cy="8" r="7" fill="#2f7fc0" /><path d="M2 7q3-4 6-1 3-3 6-1M3 11q3-3 5-1 3-2 5-1" stroke="#fff" strokeWidth="1.500" fill="none" /></> },
  { name: "Power manager", art: <><path d="M.5.5h15v15H.5z" fill="#1d85d0" /><path d="M.5 11v4.500H5z" fill="#e8c53a" /><path d="M5.500 5a4 4 0 1 0 5 0M8 2.500v5" stroke="#fff" strokeWidth="1.500" fill="none" /></> },
  { name: "Beats", art: <><circle cx="8" cy="8" r="7.500" fill="#dd1f35" /><circle cx="8.500" cy="9" r="2.800" fill="none" stroke="#8d1626" strokeWidth="1.300" /><path d="M5.700 3v6" stroke="#8d1626" strokeWidth="1.300" /></> },
  { name: "Norton", art: <><circle cx="7" cy="8" r="6" fill="#fff" stroke="#f5b921" strokeWidth="2.500" /><path d="M4 6l3 4 7-8" stroke="#222" strokeWidth="2" fill="none" /><circle cx="12" cy="12" r="4" fill="#2fa84a" /><path d="M10 12l1.500 1.500L14 10.500" stroke="#fff" fill="none" /></> },
  { name: "Network", art: <path d="M1 13h2v1H1zM4 11h2v3H4zM7 8h2v6H7zM10 5h2v9h-2zM13 2h2v12h-2z" fill="#fff" /> },
  { name: "Volume", art: <><path d="M3 5.500h3l3.500-3v11L6 10.500H3z" fill="#fff" /><path d="M12 5q2 3 0 6" stroke="#fff" fill="none" /></> },
  { name: "Dropbox", art: <><path d="M4.500 1L8 3.500 4.500 6 1 3.500zM11.500 1L15 3.500 11.500 6 8 3.500zM4.500 6L8 8.500 4.500 11 1 8.500zM11.500 6L15 8.500 11.500 11 8 8.500z" fill="#fff" /><path d="M4 12l4-2.500 4 2.500-4 2.500z" fill="#fff" /><circle cx="12" cy="12" r="3.800" fill="#2fa84a" /><path d="M10 12l1.500 1.500 2.500-3" stroke="#fff" fill="none" /></> },
];

const menus = [["", "F", "ile"], ["", "E", "dit"], ["", "V", "iew"], ["", "I", "nsert"], ["F", "o", "rmat"], ["", "T", "ools"], ["", "S", "lide Show"], ["", "W", "indow"], ["", "H", "elp"]];

export default function App() {
  return (
    <Window>
      <GlobalStyle />
      <TitleBar>
        <TitleIcon><Icon name="doc" /></TitleIcon>
        <TitleText>InheritanceDiagramExamples.odp - OpenOffice.org Impress</TitleText>
        <WindowButtons>
          <WindowButton aria-label="Minimize"><svg width="9" height="10" viewBox="0 0 9 10"><path d="M0 7h8v2H0z" fill="#222" /></svg></WindowButton>
          <WindowButton aria-label="Restore"><svg width="10" height="10" viewBox="0 0 10 10"><path d="M.5 3h7v6.500h-7zM.5 4h7M2.500 2.500v-2h7v6.500h-2" fill="none" stroke="#222" /></svg></WindowButton>
          <WindowButton $close aria-label="Close"><Cross c="#fff" s={8} /></WindowButton>
        </WindowButtons>
      </TitleBar>
      <MenuBar>
        {menus.map(([a, b, c]) => <MenuItem key={b + c}>{a}<u>{b}</u>{c}</MenuItem>)}
        <Spacer />
        <MenuTool aria-label="Updates"><Icon name="download" /></MenuTool>
        <MenuTool aria-label="Close document"><Cross /></MenuTool>
      </MenuBar>

      <ToolbarRow>
        <Toolbar>
          <Grip />
          <Tools items="doc v open save mail | edit* | pdf print | spell autospell | cut copy paste brush | undo v- redo v- | chart table v link | grid | nav zoom v | help" />
          <Overflow />
        </Toolbar>
        <Toolbar>
          <Grip />
          <Tools items="slide v layout v design | show" />
          <Overflow />
        </Toolbar>
      </ToolbarRow>
      <ToolbarRow $line="#a8a8aa">
        <Toolbar>
          <Grip />
          <Dropdown label="Font name" value="Arial" w={153} />
          <Dropdown label="Font size" value="60" w={61} />
          <Tools items="bold italic underline shadow | left centre* right justify | bullets aLeft aRight aUp aDown incSpace decSpace | charDlg paraDlg bulletDlg | fontColor v" />
          <Overflow />
        </Toolbar>
      </ToolbarRow>

      <Main>
        <SidePanel $w={168}>
          <PanelHead>
            <PanelTitle>Slides</PanelTitle>
            <button aria-label="Close slides"><Cross /></button>
          </PanelHead>
          <SlideListBox>
            <SlideList>
              {slides.map((s) => (
                <SlideItem key={s.n} $on={s.on}>
                  <SlideNumber $on={s.on}>{s.n}</SlideNumber>
                  <Thumb aria-label={`Slide ${s.n}`}>{s.art}</Thumb>
                </SlideItem>
              ))}
            </SlideList>
            <ScrollBar parts={[57, 397, 1]} />
          </SlideListBox>
        </SidePanel>
        <SplitHandle />
        <Centre>
          <Tabs>
            <Tab $on>Normal</Tab>
            <Tab>Outline</Tab>
            <Tab>Notes</Tab>
            <Tab>Handout</Tab>
            <Tab>Slide Sorter</Tab>
          </Tabs>
          <WorkRow>
            <Workspace>
              <Slide>
                <TextFrame>
                  <SlideText>
                    <Halo />
                    <Line>Overrided methods in</Line>
                    <Line>the constructor of</Line>
                    <Line><Selected>SUPER</Selected> CLASSES!</Line>
                    <IBeam width="9" height="17" viewBox="0 0 9 17">
                      <path d="M1 .5h3l.5.5.5-.5h3M4.500 1v15M1 16.500h3l.5-.5.5.5h3" stroke="#222" fill="none" />
                    </IBeam>
                  </SlideText>
                </TextFrame>
              </Slide>
            </Workspace>
            <ScrollBar parts={[105, 226, 105]} />
          </WorkRow>
          <ScrollCorner>
            <ScrollBar h parts={[217, 540, 215]} />
          </ScrollCorner>
        </Centre>
        <SplitHandle rot={180} />
        <SidePanel $w={73}>
          <PanelHead $tall>
            <Clipped>T</Clipped>
            <ViewDrop>View<Triangle /></ViewDrop>
            <button aria-label="Close tasks"><Cross /></button>
          </PanelHead>
          <TaskBody>
            <TaskTab><Disclosure />Master Pages</TaskTab>
            <TaskTab $on><Disclosure open />Layouts</TaskTab>
            <LayoutBox>
              <LayoutList>
                {layoutArt.map((l, i) => (
                  <LayoutItem key={i}>
                    <svg width="60" height="62" viewBox="0 0 60 62">
                      {l.on && <path d="M.5.500H62v60H.5zM2.500 2.500H62v56H2.500z" fill="none" stroke="#000" />}
                      <path d="M0 8.500h60" stroke="#808386" />
                      <path d="M0 54.500h60" stroke="#333" />
                      {l.body}
                    </svg>
                  </LayoutItem>
                ))}
              </LayoutList>
              <ScrollBar parts={[0, 165, 171]} end={false} />
            </LayoutBox>
            <ScrollBar h parts={[0, 28, 4]} />
            <TaskTab><Disclosure />Table Design</TaskTab>
            <TaskTab><Disclosure />Custom Animation</TaskTab>
            <TaskTab><Disclosure />Slide Transition</TaskTab>
          </TaskBody>
        </SidePanel>
      </Main>

      <ToolbarRow $line="#f2f3f7">
        <Toolbar>
          <Grip />
          <Tools items="select | line arrow rect ellipse text* | pencil v connector v block v smiley v double v flow v callout v star v | points glue | fontwork gallery picture | rotate align v arrange v | extrude animate" />
          <Overflow />
        </Toolbar>
      </ToolbarRow>

      <StatusBar>
        TextEdit: Paragraph 3, Row 3, Column 6
        <Spacer />
        <Cell $w={107} $gap={7}>
          <svg width="15" height="13" viewBox="0 0 15 13"><path d="M0 4.500h14M3.500 0v12" stroke="#337" strokeDasharray="2 1" fill="none" /><path d="M4 11.500h10V5" stroke="#333" strokeDasharray="1 1" fill="none" /></svg>
          3.96 / 5.80
        </Cell>
        <Cell $w={114} $gap={7}>
          <svg width="15" height="13" viewBox="0 0 15 13"><path d="M1.500 4v8M5 1.500h9" stroke="#222" strokeDasharray="2 1" /><path d="M5.500 4.500h8v7h-8z" stroke="#333" strokeDasharray="1 1" fill="none" /></svg>
          20.74 x 7.35
        </Cell>
        <Cell $w={16}>*</Cell>
        <Cell $w={29} />
        <Cell $w={64}>Slide 6 / 6</Cell>
        <Cell $w={253}>Default</Cell>
        <Cell $w={143}>
          <svg width="11" height="11" viewBox="0 0 11 11"><circle cx="5.500" cy="5.500" r="5" fill="#cfe2f2" stroke="#3f6a94" /><path d="M3 5.500h5" stroke="#234" /></svg>
          <ZoomRange type="range" min={0} max={100} defaultValue={26} aria-label="Zoom" />
          <svg width="11" height="11" viewBox="0 0 11 11"><circle cx="5.500" cy="5.500" r="5" fill="#cfe2f2" stroke="#3f6a94" /><path d="M3 5.500h5M5.500 3v5" stroke="#234" /></svg>
        </Cell>
        <Cell $w={31}>57%</Cell>
      </StatusBar>

      <TaskBar>
        {apps.map((a) => (
          <TaskButton key={a.name} $w={a.w} $state={a.state} aria-label={a.name}>{a.art}</TaskButton>
        ))}
        <Tray>
          {tray.map((t) => (
            <TrayButton key={t.name} aria-label={t.name}>
              <svg width="16" height="16" viewBox="0 0 16 16">{t.art}</svg>
            </TrayButton>
          ))}
          <Lang>ENG</Lang>
          <Clock>5:21 PM<br />2016-03-21</Clock>
        </Tray>
      </TaskBar>
    </Window>
  );
}
